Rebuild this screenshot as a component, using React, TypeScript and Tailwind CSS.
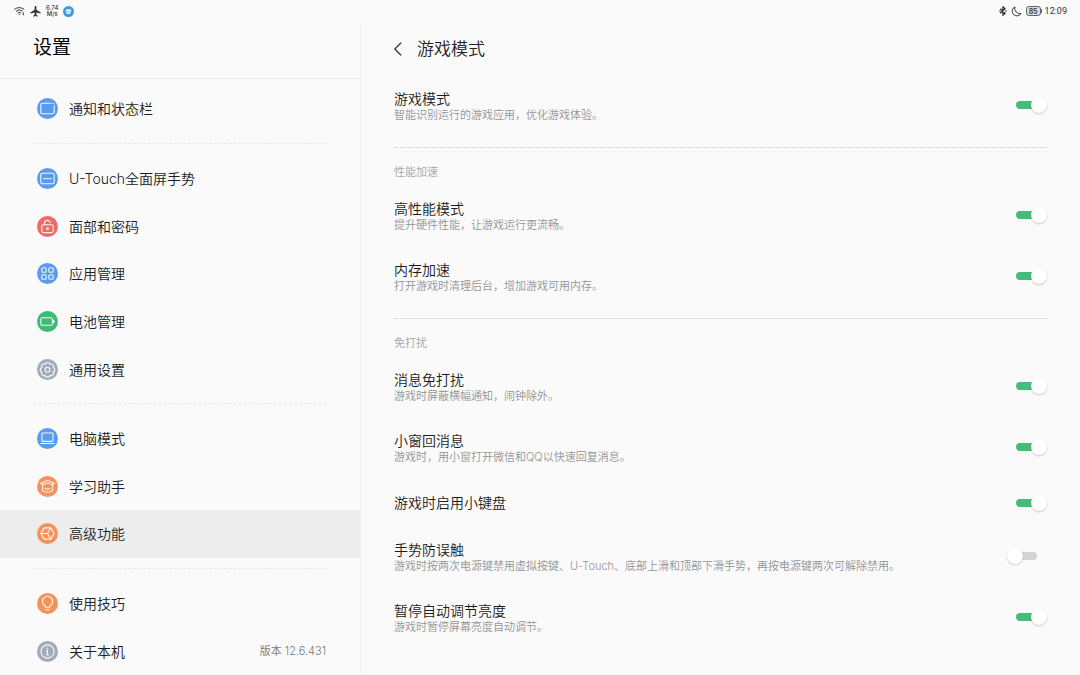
import { Fragment, useState } from "react";
import type { ReactNode } from "react";

type NavItem = { label: string; tone: string; icon: ReactNode; extra?: string };
type Option = { title: string; detail?: string; on: boolean };
type Section = { heading?: string; options: Option[] };

const blue = "bg-[#5b9bee]";
const red = "bg-[#ee6a66]";
const green = "bg-[#3fbb75]";
const gray = "bg-[#a2abb8]";
const orange = "bg-[#f4935a]";

const navGroups: NavItem[][] = [
  [
    {
      label: "通知和状态栏",
      tone: blue,
      icon: (
        <>
          <path d="M14.2 5.2H5.4a1.600 1.600 0 0 0-1.600 1.600v7.400a1.600 1.600 0 0 0 1.600 1.600h10.200a1.600 1.600 0 0 0 1.600-1.600V8" />
          <circle cx="16.400" cy="5.600" r=".8" fill="currentColor" stroke="none" />
        </>
      ),
    },
  ],
  [
    {
      label: "U-Touch全面屏手势",
      tone: blue,
      icon: (
        <>
          <rect x="3.800" y="5.200" width="13.400" height="10.600" rx="1.600" />
          <path d="M6.800 10.600h1.400M9.600 10.600h1.800M12.800 10.600h1.400" />
        </>
      ),
    },
    {
      label: "面部和密码",
      tone: red,
      icon: (
        <>
          <rect x="4.800" y="8.800" width="11.400" height="7.800" rx="1.600" />
          <path d="M7.500 8.600V7.200a3 3 0 0 1 5.900-.6" />
          <circle cx="10.500" cy="12.700" r=".8" />
        </>
      ),
    },
    {
      label: "应用管理",
      tone: blue,
      icon: (
        <>
          <rect x="4.800" y="4.800" width="4.400" height="4.400" rx="1.300" />
          <rect x="11.800" y="4.800" width="4.400" height="4.400" rx="1.300" />
          <rect x="4.800" y="11.800" width="4.400" height="4.400" rx="1.300" />
          <rect x="11.800" y="11.800" width="4.400" height="4.400" rx="1.300" />
        </>
      ),
    },
    {
      label: "电池管理",
      tone: green,
      icon: (
        <>
          <rect x="3.800" y="6.700" width="11.600" height="7.600" rx="1.500" />
          <path d="M16.400 9.200l1 1.300-1 1.300z" fill="currentColor" />
        </>
      ),
    },
    {
      label: "通用设置",
      tone: gray,
      icon: (
        <>
          <path d="M9 3.800h3l.8 1.500 1.800-.5 2 2-.5 1.800 1.500.8v2.900l-1.500.8.5 1.800-2 2-1.800-.5-.8 1.500H9l-.8-1.500-1.800.5-2-2 .5-1.800-1.500-.8V9.400l1.500-.8-.5-1.800 2-2 1.800.5z" />
          <circle cx="10.500" cy="10.800" r="2.400" />
        </>
      ),
    },
  ],
  [
    {
      label: "电脑模式",
      tone: blue,
      icon: (
        <>
          <rect x="5" y="5" width="11" height="8.400" rx="1" />
          <path d="M3.800 15.500h13.400" />
        </>
      ),
    },
    {
      label: "学习助手",
      tone: orange,
      icon: (
        <>
          <path d="M3.600 7.200l6.900-2.700 6.900 2.700-1.800 1.300-5.100-1.300-5.100 1.300z" />
          <path d="M5.600 8.600v6c1.400 1.200 3 1.700 4.900 1.700s3.500-.5 4.900-1.700v-6M8.200 12.200l2.300 1.200 2.300-1.200" />
        </>
      ),
    },
    {
      label: "高级功能",
      tone: orange,
      icon: (
        <>
          <path d="M7.300 4.900h6.400l3.400 5.600-3.400 5.600H7.300l-3.400-5.600z" />
          <path d="M3.900 10.500h6.600l3.200-5.600M10.500 10.500l3.200 5.600" />
        </>
      ),
    },
  ],
  [
    {
      label: "使用技巧",
      tone: orange,
      icon: (
        <>
          <path d="M8.400 14.200c0-1.700-3-2.700-3-5.800a5.100 5.100 0 0 1 10.200 0c0 3.100-3 4.100-3 5.800z" />
          <path d="M9.100 16.600h2.800" />
        </>
      ),
    },
    {
      label: "关于本机",
      tone: gray,
      extra: "版本 12.6.431",
      icon: (
        <>
          <circle cx="10.500" cy="10.500" r="6.600" />
          <path d="M10.500 9.600v4.200M9.400 9.600h1.100M9.300 13.800h2.400" />
          <circle cx="10.500" cy="7.300" r=".8" fill="currentColor" stroke="none" />
        </>
      ),
    },
  ],
];

const sections: Section[] = [
  {
    options: [{ title: "游戏模式", detail: "智能识别运行的游戏应用，优化游戏体验。", on: true }],
  },
  {
    heading: "性能加速",
    options: [
      { title: "高性能模式", detail: "提升硬件性能，让游戏运行更流畅。", on: true },
      { title: "内存加速", detail: "打开游戏时清理后台，增加游戏可用内存。", on: true },
    ],
  },
  {
    heading: "免打扰",
    options: [
      { title: "消息免打扰", detail: "游戏时屏蔽横幅通知，闹钟除外。", on: true },
      { title: "小窗回消息", detail: "游戏时，用小窗打开微信和QQ以快速回复消息。", on: true },
      { title: "游戏时启用小键盘", on: true },
      {
        title: "手势防误触",
        detail:
          "游戏时按两次电源键禁用虚拟按键、U-Touch、底部上滑和顶部下滑手势，再按电源键两次可解除禁用。",
        on: false,
      },
      { title: "暂停自动调节亮度", detail: "游戏时暂停屏幕亮度自动调节。", on: true },
    ],
  },
];

function StatusBar() {
  return (
    <div className="flex h-[22px] shrink-0 items-center justify-between pr-[13px] pl-[14px] text-[#333]">
      <div className="flex items-center gap-[5px]">
        <svg width="11" height="10" viewBox="0 0 11 10" fill="none" stroke="currentColor" strokeWidth="1" strokeLinecap="round" role="img" aria-label="Wi-Fi">
          <path d="M.7 3.200a7 7 0 0 1 9.200 0M2.300 5a4.600 4.600 0 0 1 6 0M3.900 6.800a2.200 2.200 0 0 1 2.800 0" />
          <circle cx="5.300" cy="8.300" r=".6" fill="currentColor" stroke="none" />
          <path d="M9.300 6.800v2" />
        </svg>
        <svg width="11" height="11" viewBox="0 0 11 11" fill="currentColor" role="img" aria-label="飞行模式">
          <path d="M5.500 0c.6 0 .9.700.9 1.300v2.500l4.300 2.700v1.100L6.400 6.400v2.400l1.300 1V10.700l-2.200-.6-2.200.6V9.800l1.300-1V6.400L.3 7.600V6.500l4.300-2.700V1.300C4.600.700 4.900 0 5.500 0z" />
        </svg>
        <div className="text-center text-[6px] leading-[6px] font-medium">
          <div>6.74</div>
          <div>M/s</div>
        </div>
        <svg width="11" height="11" viewBox="0 0 11 11" aria-hidden="true">
          <circle cx="5.500" cy="5.500" r="5.500" fill="#3d9be3" />
          <path d="M2.800 4.500a1 1 0 0 1 1-1h3.400a1 1 0 0 1 1 1v.9H2.800z" fill="#fff" />
          <path d="M3.300 6h4.400v.5a1.500 1.500 0 0 1-1.500 1.500H4.800a1.500 1.500 0 0 1-1.500-1.500z" fill="#d6ecfb" />
        </svg>
      </div>
      <div className="flex items-center gap-1">
        <svg width="8" height="10" viewBox="0 0 8 10" fill="none" stroke="currentColor" strokeWidth="1.200" strokeLinejoin="round" role="img" aria-label="蓝牙">
          <path d="M1.300 2.700l4.800 4.600L3.900 9.300V.7l2.200 2L1.300 7.300" />
          <path d="M.6 5h.8M6.600 5h.8" strokeLinecap="round" />
        </svg>
        <svg width="11" height="11" viewBox="0 0 11 11" fill="none" stroke="currentColor" strokeWidth="1" strokeLinejoin="round" role="img" aria-label="勿扰">
          <path d="M4 .9A4.700 4.700 0 1 0 10 7.500 5.200 5.200 0 0 1 4 .9z" />
        </svg>
        <div className="flex items-center">
          <div className="flex h-[10px] w-[15px] items-center justify-center rounded-[3px] border border-[#666] bg-[#ddd] text-[7px] leading-none font-semibold">
            85
          </div>
          <div className="h-1 w-px bg-[#666]" />
        </div>
        <div className="-ml-px font-[Roboto] text-[9px] leading-none font-normal">12:09</div>
      </div>
    </div>
  );
}

function Sidebar() {
  return (
    <aside className="flex w-1/3 shrink-0 flex-col">
      <h1 className="flex h-14 shrink-0 items-center pb-[5px] pl-[33px] text-[19px] leading-none font-normal text-black">
        设置
      </h1>
      <nav className="flex flex-1 flex-col border-t border-[#efefef] pt-[6px]">
        {navGroups.map((group, index) => (
          <Fragment key={index}>
            {index > 0 && <hr className="mx-[33px] mt-[10px] mb-[11px] border-t border-dashed border-[#e8e8e8]" />}
            {group.map((item) => (
              <a
                key={item.label}
                href="#"
                aria-current={item.label === "高级功能" ? "page" : undefined}
                className="flex min-h-11 flex-1 items-center pr-[34px] pl-[37px] text-[#1c1c1c] aria-[current=page]:bg-[#ededed]"
              >
                <span className={`${item.tone} mr-[11px] size-[21px] shrink-0 rounded-full text-white/90`}>
                  <svg
                    viewBox="0 0 21 21"
                    className="size-full"
                    fill="none"
                    stroke="currentColor"
                    strokeWidth="1.100"
                    strokeLinecap="round"
                    strokeLinejoin="round"
                    aria-hidden="true"
                  >
                    {item.icon}
                  </svg>
                </span>
                <span className="flex-1 pt-px text-[14px] leading-[18px]">{item.label}</span>
                {item.extra && <span className="text-[11px] leading-[14px] text-[#777]">{item.extra}</span>}
              </a>
            ))}
          </Fragment>
        ))}
      </nav>
    </aside>
  );
}

function OptionRow({ option }: { option: Option }) {
  const [on, setOn] = useState(option.on);
  return (
    <label
      className={
        option.detail
          ? "flex min-h-[61px] items-start justify-between gap-6 pt-[14px]"
          : "flex min-h-12 items-center justify-between gap-6"
      }
    >
      <span className="flex flex-col">
        <span className="text-[14px] leading-[18px] text-[#1c1c1c]">{option.title}</span>
        {option.detail && <span className="text-[11px] leading-[14px] text-[#949494]">{option.detail}</span>}
      </span>
      <span className="flex h-[30px] shrink-0 items-center">
        <input
          type="checkbox"
          role="switch"
          checked={on}
          onChange={(event) => setOn(event.target.checked)}
          className="relative h-4 w-10 appearance-none before:absolute before:top-1 before:left-[9px] before:h-2 before:w-[21px] before:rounded-full before:bg-[#d4d4d4] after:absolute after:top-0 after:left-0 after:size-4 after:rounded-full after:bg-white after:shadow-[0_1px_2px_rgba(0,0,0,0.2)] checked:before:bg-[#45bd78] checked:after:left-6"
        />
      </span>
    </label>
  );
}

export default function App() {
  return (
    <div className="flex min-h-screen flex-col bg-[#fafafa] font-['Inter','Noto_Sans_CJK_SC',sans-serif] font-[350]">
      <StatusBar />
      <div className="flex flex-1">
        <Sidebar />
        <main className="min-w-0 flex-1 border-l border-[#f3f3f3] px-[33px]">
          <header className="flex h-[54px] items-center gap-[13px]">
            <button type="button" aria-label="返回" className="flex w-[10px] text-[#333]">
              <svg width="10" height="14" viewBox="0 0 10 14" fill="none" stroke="currentColor" strokeWidth="1.200" strokeLinecap="round" strokeLinejoin="round">
                <path d="M6.800 1L.8 7l6 6" />
              </svg>
            </button>
            <h2 className="text-[17px] leading-6 text-[#222]">游戏模式</h2>
          </header>
          {sections.map((section, index) => (
            <section key={index}>
              {section.heading && (
                <>
                  <hr className="mt-[10px] border-t border-dotted border-[#d0d0d0]" />
                  <h3 className="pt-[17px] pb-[7px] text-[11px] leading-[14px] text-[#a4a4a4]">{section.heading}</h3>
                </>
              )}
              {section.options.map((option) => (
                <OptionRow key={option.title} option={option} />
              ))}
            </section>
          ))}
        </main>
      </div>
    </div>
  );
}
